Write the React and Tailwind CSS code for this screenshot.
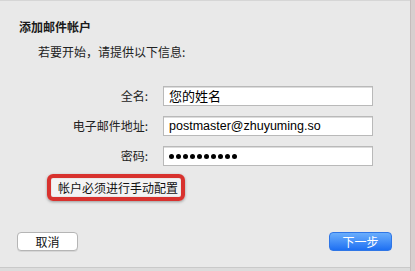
import React from 'react';

const cjk = { fontFamily: '"Noto Sans CJK SC", "Liberation Sans", sans-serif' };
const latin = { fontFamily: '"Liberation Sans", "Noto Sans CJK SC", sans-serif' };

const Field = ({ label, children }) => (
  <>
    <div className="h-[20px] flex items-center justify-end text-[12px] text-[#222]" style={cjk}>{label}</div>
    <div className="h-[20px] w-[210px] bg-white border border-[#b9b9b9] flex items-center pl-[5px] text-[13px] text-black shadow-[inset_0_1px_0_#dcdcdc]">
      {children}
    </div>
  </>
);

const App = () => {
  return (
    <div className="w-[415px] h-[271px] flex flex-col bg-[#dcdcdc] overflow-hidden">
      <div className="flex flex-1">
        <div className="w-[410px] h-[268px] bg-[#e9e9e9] border-t border-[#d6d6d6] border-b border-b-[#c9c9c9] flex flex-col">
          <div className="pl-[19px] pt-[18px] leading-[16px] text-[12px] font-bold text-[#1a1a1a]" style={cjk}>添加邮件帐户</div>
          <div className="pl-[38px] mt-[9px] leading-[16px] text-[12px] text-[#222]" style={cjk}>若要开始，请提供以下信息:</div>

          <div className="mt-[26px] grid grid-cols-[148px_210px] gap-x-[15px] gap-y-[10px]">
            <Field label="全名:"><span style={cjk}>您的姓名</span></Field>
            <Field label="电子邮件地址:"><span className="text-[12.5px]" style={latin}>postmaster@zhuyuming.so</span></Field>
            <Field label="密码:">
              <div className="flex gap-[2px]">
                {Array.from({ length: 10 }).map((_, i) => (
                  <div key={i} className="w-[5px] h-[5px] rounded-full bg-black" />
                ))}
              </div>
            </Field>
          </div>

          <div className="ml-[47px] mt-[8px] w-[138px] h-[27px] border-[4px] border-[#d8322e] rounded-[6px] shadow-[0_1px_3px_rgba(0,0,0,0.35)] flex items-center px-[1px]">
            <div className="w-full h-[17px] bg-[#f3f3f3] flex items-center pl-[6px] text-[12px] text-[#111]" style={cjk}>帐户必须进行手动配置</div>
          </div>

          <div className="mt-[31px] flex justify-between pl-[17px] pr-[18px]">
            <div className="w-[61px] h-[19px] bg-white border border-[#b5b5b5] rounded-[4px] flex items-center justify-center text-[12px] text-[#111] shadow-[0_1px_0_rgba(0,0,0,0.08)]" style={cjk}>取消</div>
            <div className="w-[63px] h-[19px] rounded-[4px] bg-gradient-to-b from-[#6aaefc] to-[#1d6ff2] border border-[#2f76e6] flex items-center justify-center text-[12px] text-white" style={cjk}>下一步</div>
          </div>
        </div>
        <div className="w-[5px] bg-[#d7cfcf] border-l border-[#c5bcbc]" />
      </div>
    </div>
  );
};

export default App;
